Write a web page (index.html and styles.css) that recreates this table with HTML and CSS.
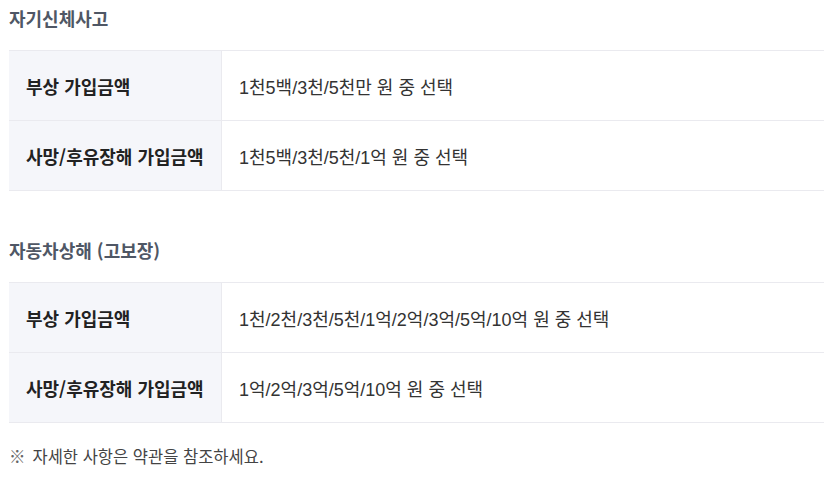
FILE: index.html
```html
<!DOCTYPE html>
<html lang="ko">
<head>
<meta charset="utf-8">
<link rel="stylesheet" href="styles.css">
</head>
<body>
<div class="page">
  <section class="section">
    <h2 class="section-title">자기신체사고</h2>
    <div class="table">
      <div class="row">
        <div class="th">부상 가입금액</div>
        <div class="td">1천5백/3천/5천만 원 중 선택</div>
      </div>
      <div class="row">
        <div class="th">사망/후유장해 가입금액</div>
        <div class="td">1천5백/3천/5천/1억 원 중 선택</div>
      </div>
    </div>
  </section>
  <section class="section">
    <h2 class="section-title">자동차상해 (고보장)</h2>
    <div class="table">
      <div class="row">
        <div class="th">부상 가입금액</div>
        <div class="td">1천/2천/3천/5천/1억/2억/3억/5억/10억 원 중 선택</div>
      </div>
      <div class="row">
        <div class="th">사망/후유장해 가입금액</div>
        <div class="td">1억/2억/3억/5억/10억 원 중 선택</div>
      </div>
    </div>
  </section>
  <p class="note"><span class="mark">※</span>자세한 사항은 약관을 참조하세요.</p>
</div>
</body>
</html>
```
FILE: styles.css
```css
* { box-sizing: border-box; }
html, body { margin: 0; padding: 0; background: #fff; }
body {
  font-family: "Liberation Sans", "Noto Sans CJK KR", sans-serif;
  color: #333;
}
.page {
  padding: 6px 0 0 9px;
}
.section + .section { margin-top: 47px; }
.section-title {
  margin: 0 0 19px;
  font-family: "Noto Sans CJK KR", sans-serif;
  font-size: 18px;
  line-height: 25px;
  font-weight: 700;
  color: #4f5765;
}
.table {
  border-top: 1px solid #eaeaef;
}
.row {
  display: flex;
  height: 70px;
  border-bottom: 1px solid #eaeaef;
}
.th {
  flex: 0 0 213px;
  background: #f5f6fa;
  border-right: 1px solid #eaeaef;
  display: flex;
  align-items: center;
  padding-left: 17px;
  font-family: "Noto Sans CJK KR", sans-serif;
  font-weight: 700;
  font-size: 18px;
  color: #222;
}
.td {
  flex: 1;
  display: flex;
  align-items: center;
  padding-left: 17px;
  font-size: 18px;
  color: #333;
}
.note {
  margin: 22px 0 0;
  font-family: "Noto Sans CJK KR", sans-serif;
  font-size: 16.5px;
  line-height: 22px;
  color: #444;
}
.mark {
  margin-right: 7px;
  color: #666;
}
```
